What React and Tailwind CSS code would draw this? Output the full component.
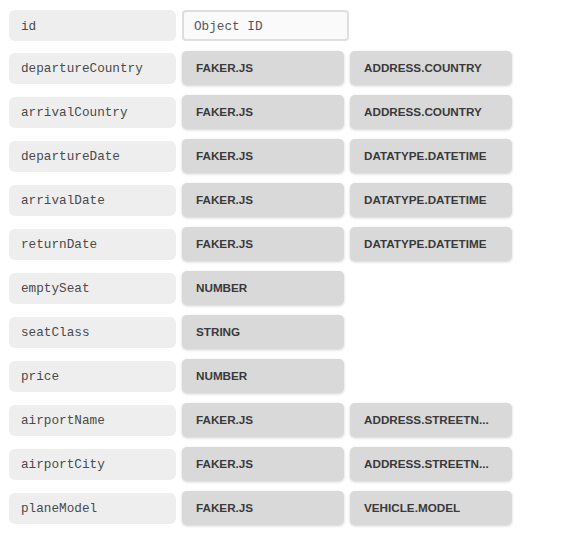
const rows = [
  { name: "departureCountry", type: "FAKER.JS", sub: "ADDRESS.COUNTRY" },
  { name: "arrivalCountry", type: "FAKER.JS", sub: "ADDRESS.COUNTRY" },
  { name: "departureDate", type: "FAKER.JS", sub: "DATATYPE.DATETIME" },
  { name: "arrivalDate", type: "FAKER.JS", sub: "DATATYPE.DATETIME" },
  { name: "returnDate", type: "FAKER.JS", sub: "DATATYPE.DATETIME" },
  { name: "emptySeat", type: "NUMBER" },
  { name: "seatClass", type: "STRING" },
  { name: "price", type: "NUMBER" },
  { name: "airportName", type: "FAKER.JS", sub: "ADDRESS.STREETN..." },
  { name: "airportCity", type: "FAKER.JS", sub: "ADDRESS.STREETN..." },
  { name: "planeModel", type: "FAKER.JS", sub: "VEHICLE.MODEL" },
];

const Label = ({ children }) => (
  <div className="w-[167px] h-[31px] flex items-center pl-3 pt-[2px] rounded-md bg-[#eeeeee] text-[#4a4a4a] text-[12.7px] font-['Liberation_Mono',monospace]">
    {children}
  </div>
);

const Chip = ({ children }) => (
  <div className="w-[162px] h-[34px] flex items-center pl-[14px] rounded-[5px] bg-[#d9d9d9] shadow-[0_1px_3px_rgba(0,0,0,0.18)] text-[#3a3a3a] text-[11.7px] font-bold font-['Liberation_Sans',Arial,sans-serif]">
    {children}
  </div>
);

export default function App() {
  return (
    <div className="min-h-screen bg-white pt-[10px] pl-[9px] flex flex-col gap-[10px]">
      <div className="flex items-center gap-[6px]">
        <Label>id</Label>
        <div className="w-[167px] h-[31px] flex items-center pl-[10px] pt-[2px] rounded-[4px] border-2 border-[#dedede] bg-[#fafafa] text-[#555] text-[12.7px] font-['Liberation_Mono',monospace]">
          Object ID
        </div>
      </div>
      {rows.map((r) => (
        <div key={r.name} className="flex items-center gap-[6px]">
          <Label>{r.name}</Label>
          <Chip>{r.type}</Chip>
          {r.sub && <Chip>{r.sub}</Chip>}
        </div>
      ))}
    </div>
  );
}
